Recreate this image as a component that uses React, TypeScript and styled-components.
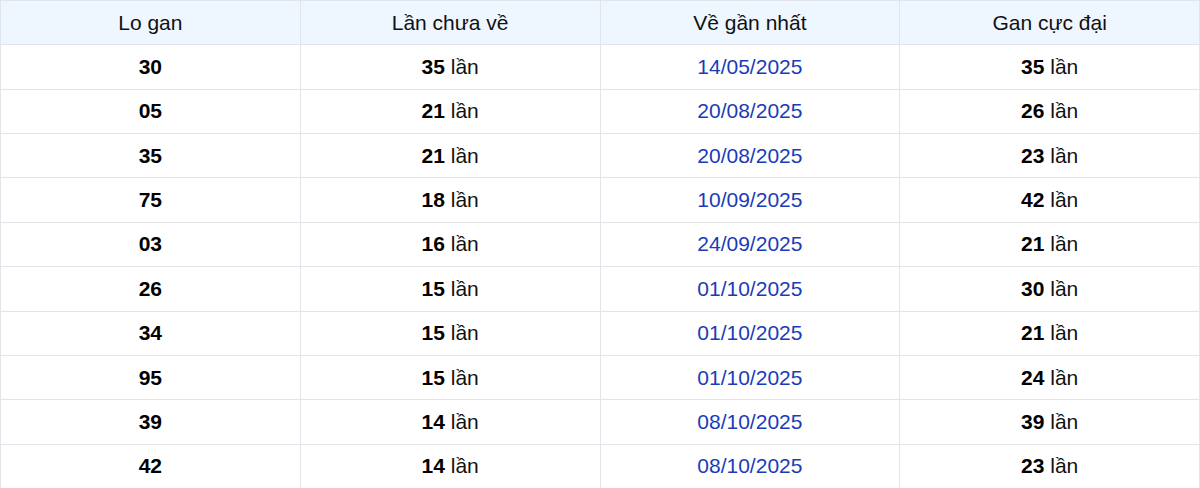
import React from 'react'
import styled, { createGlobalStyle } from 'styled-components'

const GlobalStyle = createGlobalStyle`
	html, body {
		margin: 0;
		padding: 0;
		background: #fff;
	}
	body {
		font-family: "Liberation Sans", Arial, sans-serif;
		color: #111;
	}
`

const Table = styled.table`
	width: 100%;
	border-collapse: collapse;
	table-layout: fixed;
	font-size: 21px;
	th,
	td {
		border: 1px solid #e1e4e8;
		text-align: center;
		vertical-align: middle;
		height: 43.36px;
		padding: 0 8px;
	}
	th {
		background: #eef6ff;
		font-weight: normal;
		color: #111;
	}
`

const Num = styled.b`
	font-weight: 700;
	color: #000;
`

const DateCell = styled.td`
	color: #1a3cb8;
`

type Row = { lo: string; chua: number; date: string; max: number }

const rows: Row[] = [
	{ lo: '30', chua: 35, date: '14/05/2025', max: 35 },
	{ lo: '05', chua: 21, date: '20/08/2025', max: 26 },
	{ lo: '35', chua: 21, date: '20/08/2025', max: 23 },
	{ lo: '75', chua: 18, date: '10/09/2025', max: 42 },
	{ lo: '03', chua: 16, date: '24/09/2025', max: 21 },
	{ lo: '26', chua: 15, date: '01/10/2025', max: 30 },
	{ lo: '34', chua: 15, date: '01/10/2025', max: 21 },
	{ lo: '95', chua: 15, date: '01/10/2025', max: 24 },
	{ lo: '39', chua: 14, date: '08/10/2025', max: 39 },
	{ lo: '42', chua: 14, date: '08/10/2025', max: 23 },
]

export default function App() {
	return (
		<>
			<GlobalStyle />
			<Table>
				<thead>
					<tr>
						<th>Lo gan</th>
						<th>Lần chưa về</th>
						<th>Về gần nhất</th>
						<th>Gan cực đại</th>
					</tr>
				</thead>
				<tbody>
					{rows.map((r, i) => (
						<tr key={i}>
							<td>
								<Num>{r.lo}</Num>
							</td>
							<td>
								<Num>{r.chua}</Num> lần
							</td>
							<DateCell>{r.date}</DateCell>
							<td>
								<Num>{r.max}</Num> lần
							</td>
						</tr>
					))}
				</tbody>
			</Table>
		</>
	)
}
